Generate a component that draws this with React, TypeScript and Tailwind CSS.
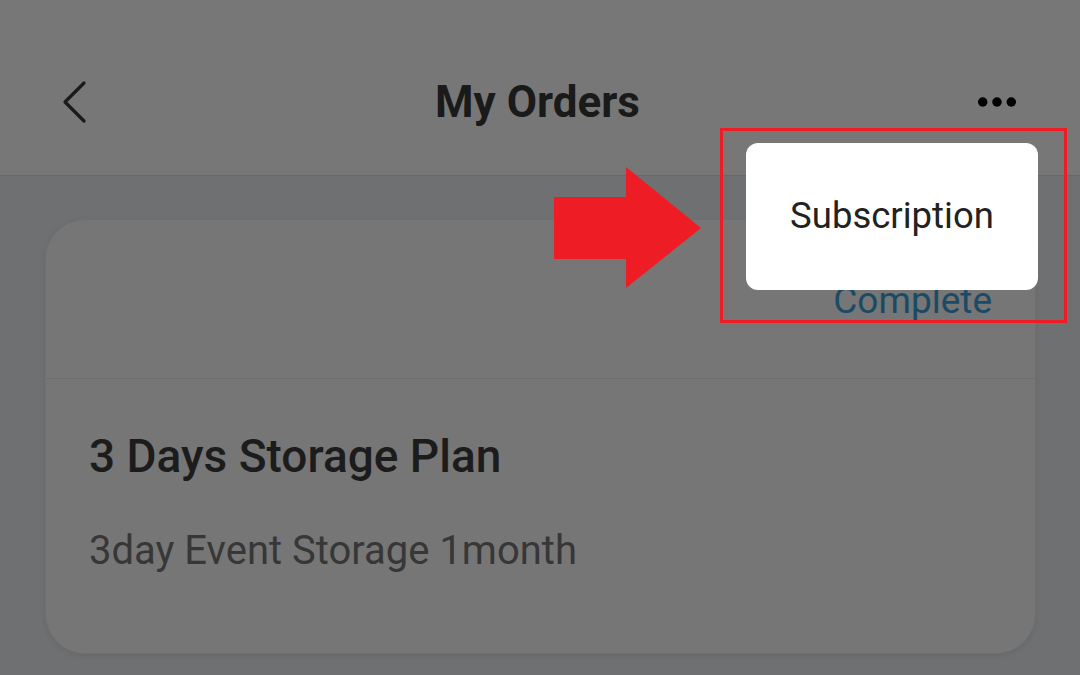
import React from "react";

export default function App() {
  return (
    <div
      className="relative w-[1080px] h-[675px] overflow-hidden bg-[#6f7071]"
      style={{ fontFamily: "Roboto, 'Noto Sans', sans-serif" }}
    >
      {/* Header */}
      <div className="h-[176px] bg-[#777777] border-b border-[#666767] flex items-center pl-[58px] pr-[63px] pt-[28px]">
        <div className="w-[40px] flex items-center">
          <svg width="30" height="44" viewBox="0 0 30 44">
            <polyline points="26,3 7,22 26,41" fill="none" stroke="#1a1a1a" strokeWidth="3.2" strokeLinecap="round" strokeLinejoin="round" />
          </svg>
        </div>
        <div className="flex-1 text-center text-[44px] font-bold text-[#1a1a1a] leading-none">My Orders</div>
        <div className="w-[40px] flex justify-end">
          <svg width="42" height="14" viewBox="0 0 42 14">
            <circle cx="6" cy="7" r="5" fill="#000" />
            <circle cx="21" cy="7" r="5" fill="#000" />
            <circle cx="36" cy="7" r="5" fill="#000" />
          </svg>
        </div>
      </div>

      {/* Content */}
      <div className="pt-[43px] pl-[45px]">
        <div className="w-[991px] h-[435px] rounded-[40px] bg-[#767676] border border-[#707070] shadow-[0_2px_6px_rgba(0,0,0,0.08)] flex flex-col overflow-hidden">
          <div className="h-[159px] shrink-0 border-b border-[#6e6e6e] flex items-end justify-end pr-[43px] pb-[59px]">
            <span className="text-[37px] text-[#1b4a66] leading-none">Complete</span>
          </div>
          <div className="flex flex-col pl-[43px] pt-[54px]">
            <div className="text-[46px] font-medium text-[#1c1c1c] leading-none">3 Days Storage Plan</div>
            <div className="text-[40px] text-[#373737] leading-none mt-[52px]">3day Event Storage 1month</div>
          </div>
        </div>
      </div>

      {/* Highlight box */}
      <div className="absolute left-[720px] top-[128px] w-[347px] h-[195px] border-[3px] border-[#ee1c25]" />

      {/* Popup menu */}
      <div className="absolute left-[746px] top-[143px] w-[292px] h-[147px] bg-white rounded-[12px] flex items-center justify-center">
        <span className="text-[36.5px] text-[#222222] leading-none">Subscription</span>
      </div>

      {/* Arrow */}
      <svg className="absolute left-[554px] top-[167px]" width="148" height="122" viewBox="0 0 148 122">
        <polygon points="0,30 72,30 72,0 147,61 72,121 72,92 0,92" fill="#ee1c25" />
      </svg>
    </div>
  );
}
